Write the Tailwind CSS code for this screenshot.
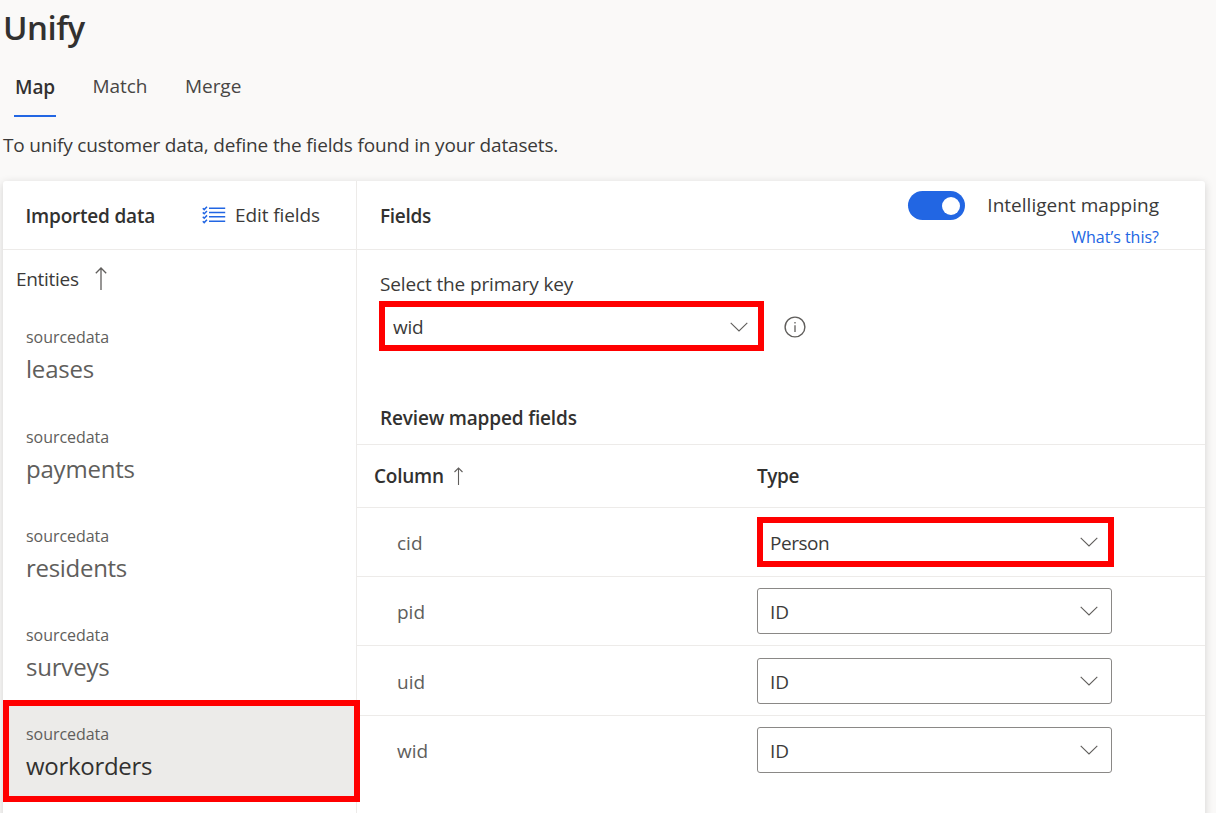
<!DOCTYPE html>
<html lang="en">
<head>
<meta charset="utf-8">
<title>Unify</title>
<script src="https://cdn.jsdelivr.net/npm/@tailwindcss/browser@4"></script>
</head>
<body class="bg-white font-['Open_Sans','Noto_Sans',sans-serif] text-[19px] text-[#323130]">
<svg class="hidden">
  <symbol id="chevron" viewBox="0 0 18 10"><path d="M0.7 0.8 L9 9 L17.3 0.8" fill="none" stroke="currentColor" stroke-width="1.1"/></symbol>
</svg>
<main class="h-[813px] w-[1216px] overflow-hidden bg-[#faf9f8]">
  <h1 class="h-[56px] pl-[3px] text-[33px] leading-[56px] font-semibold tracking-[-0.5px]">Unify</h1>
  <nav class="flex h-[61px] pl-[14px] leading-[61px] tracking-[-0.05px] text-[#484644]">
    <div class="h-[61px] w-[42px] border-b-2 border-[#2266e3] pl-px leading-[62px] font-semibold tracking-[-0.1px] text-[#323130]">Map</div>
    <div class="ml-[36.5px] w-[92.5px]">Match</div>
    <div>Merge</div>
  </nav>
  <p class="mb-[8px] h-[56px] pl-[3px] leading-[56px] tracking-[-0.16px] text-[#3b3a39]">To unify customer data, define the fields found in your datasets.</p>

  <section class="ml-[3px] flex h-[640px] w-[1202px] rounded-[3px] bg-white shadow-[0_2px_8px_rgba(0,0,0,0.16)]">
    <aside class="w-[354px] shrink-0 border-r border-[#edebe9]">
      <div class="flex h-[69px] items-center border-b border-[#edebe9] pl-[22.5px]">
        <h2 class="w-[176px] pt-[3px] font-semibold tracking-[-0.2px]">Imported data</h2>
        <svg class="mt-[-1px] h-[18px] w-[24px] text-[#2266e3]" viewBox="0 0 24 18" fill="none" stroke="currentColor">
          <path d="M7 2.2H23.2M7 6.4H23.2M7 10.8H23.2M7 15.2H23.2" stroke-width="1.5"/>
          <path d="M0.8 2.2L2.2 3.6L5 0.8M0.8 6.4L2.2 7.8L5 5M0.8 10.8L2.2 12.2L5 9.4M0.8 15.2L2.2 16.6L5 13.8" stroke-width="1.5"/>
        </svg>
        <span class="ml-[9.5px] pt-px tracking-[-0.1px] text-[#3b3a39]">Edit fields</span>
      </div>
      <div class="flex h-[56px] items-center gap-[16px] pt-[2px] pl-[13px]">
        <span class="tracking-[-0.3px] text-[#3b3a39]">Entities</span>
        <svg class="mt-[-2px] h-[23px] w-[12px] text-[#605e5c]" viewBox="0 0 12 23" fill="none" stroke="currentColor" stroke-width="1.3"><path d="M6 23V1M0.8 6.2L6 1L11.2 6.2"/></svg>
      </div>
      <ul class="text-[24px] tracking-[-0.2px] text-[#605e5c]">
        <li class="h-[99px] pt-[19px] pl-[23px]"><div class="h-[24px] text-[16px] leading-[24px] tracking-[-0.05px]">sourcedata</div><div class="leading-[40px]">leases</div></li>
        <li class="h-[99px] pt-[20px] pl-[23px]"><div class="h-[24px] text-[16px] leading-[24px] tracking-[-0.05px]">sourcedata</div><div class="leading-[40px]">payments</div></li>
        <li class="h-[99px] pt-[20px] pl-[23px]"><div class="h-[24px] text-[16px] leading-[24px] tracking-[-0.05px]">sourcedata</div><div class="leading-[40px] tracking-[-0.3px]">residents</div></li>
        <li class="h-[97px] pt-[20px] pl-[23px]"><div class="h-[24px] text-[16px] leading-[24px] tracking-[-0.05px]">sourcedata</div><div class="leading-[40px]">surveys</div></li>
        <li class="relative h-[102px] w-[357px] border-6 border-[#ff0000] bg-[#ecebe9] pt-[16px] pl-[17px]"><div class="h-[24px] text-[16px] leading-[24px] tracking-[-0.05px]">sourcedata</div><div class="leading-[39px] tracking-[-0.3px] text-[#323130]">workorders</div></li>
      </ul>
    </aside>

    <div class="flex-1">
      <header class="flex h-[69px] justify-between border-b border-[#edebe9] pr-[46px] pl-[23px]">
        <h2 class="font-semibold leading-[70px] tracking-[-0.3px]">Fields</h2>
        <div class="flex gap-[22px] pt-[10px]">
          <div class="flex h-[29px] w-[57px] items-center justify-end rounded-full bg-[#2266e3] pr-[5px]"><div class="size-[18px] rounded-full bg-white"></div></div>
          <div class="text-right text-[#3b3a39]">
            <div class="h-[30px] leading-[28px] tracking-[0.02px]">Intelligent mapping</div>
            <div class="h-[28px] text-[16px] leading-[32px] text-[#2266e3]">What’s this?</div>
          </div>
        </div>
      </header>

      <div class="h-[195px] border-b border-[#edebe9] pt-[19px]">
        <div class="h-[32px] pl-[23px] leading-[31px] tracking-[-0.13px] text-[#3b3a39]">Select the primary key</div>
        <div class="flex items-center gap-[20px] pl-[22px]">
          <div class="flex h-[50px] w-[385px] items-center justify-between border-6 border-[#ff0000] bg-white pr-[10px] pl-[8px] text-[#3b3a39]"><span class="pt-[3px] tracking-[-0.2px]">wid</span><svg class="mt-px h-[10px] w-[18px] text-[#605e5c]"><use href="#chevron"/></svg></div>
          <svg class="mt-px -ml-[0.5px] h-[22px] w-[22px] text-[#605e5c]" viewBox="0 0 22 22" fill="none" stroke="currentColor" stroke-width="1.4"><circle cx="11" cy="11" r="9.9"/><path d="M11 9.2V16M11 6V7.6" stroke-width="1.3"/></svg>
        </div>
        <h3 class="pt-[51px] pl-[23px] leading-[32px] font-semibold tracking-[-0.16px]">Review mapped fields</h3>
      </div>

      <div class="flex h-[63px] items-center border-b border-[#edebe9] pl-[17px] font-semibold">
        <div class="flex w-[383px] items-center gap-[10px]"><span class="pt-px tracking-[-0.25px]">Column</span><svg class="h-[18px] w-[9px] text-[#605e5c]" viewBox="0 0 9 18" fill="none" stroke="currentColor" stroke-width="1.1"><path d="M4.5 18V1M0.5 5L4.5 1L8.5 5"/></svg></div>
        <span class="pt-px tracking-[-0.4px]">Type</span>
      </div>

      <div class="flex h-[69px] items-center border-b border-[#edebe9] pl-[40px]">
        <span class="w-[360px] pt-[2px] text-[#605e5c]">cid</span>
        <div class="flex h-[50px] w-[357px] items-center justify-between border-6 border-[#ff0000] bg-white pr-[10px] pl-[7px] text-[#3b3a39]"><span class="pt-[2px] tracking-[-0.45px]">Person</span><svg class="h-[10px] w-[18px] text-[#605e5c]"><use href="#chevron"/></svg></div>
      </div>
      <div class="flex h-[69px] items-center border-b border-[#edebe9] pl-[40px]">
        <span class="w-[360px] pt-[3px] text-[#605e5c]">pid</span>
        <div class="flex h-[46px] w-[355px] items-center justify-between rounded-[3px] border border-[#8a8886] bg-white pr-[13px] pl-[12px] text-[#3b3a39]"><span class="pt-[3px]">ID</span><svg class="h-[10px] w-[18px] text-[#605e5c]"><use href="#chevron"/></svg></div>
      </div>
      <div class="flex h-[70px] items-center border-b border-[#edebe9] pl-[40px]">
        <span class="w-[360px] pt-[3px] text-[#605e5c]">uid</span>
        <div class="flex h-[46px] w-[355px] items-center justify-between rounded-[3px] border border-[#8a8886] bg-white pr-[13px] pl-[12px] text-[#3b3a39]"><span class="pt-[3px]">ID</span><svg class="h-[10px] w-[18px] text-[#605e5c]"><use href="#chevron"/></svg></div>
      </div>
      <div class="flex h-[68px] items-center pl-[40px]">
        <span class="w-[360px] pt-[3px] text-[#605e5c]">wid</span>
        <div class="flex h-[46px] w-[355px] items-center justify-between rounded-[3px] border border-[#8a8886] bg-white pr-[13px] pl-[12px] text-[#3b3a39]"><span class="pt-[3px]">ID</span><svg class="h-[10px] w-[18px] text-[#605e5c]"><use href="#chevron"/></svg></div>
      </div>
    </div>
  </section>
</main>
</body>
</html>
